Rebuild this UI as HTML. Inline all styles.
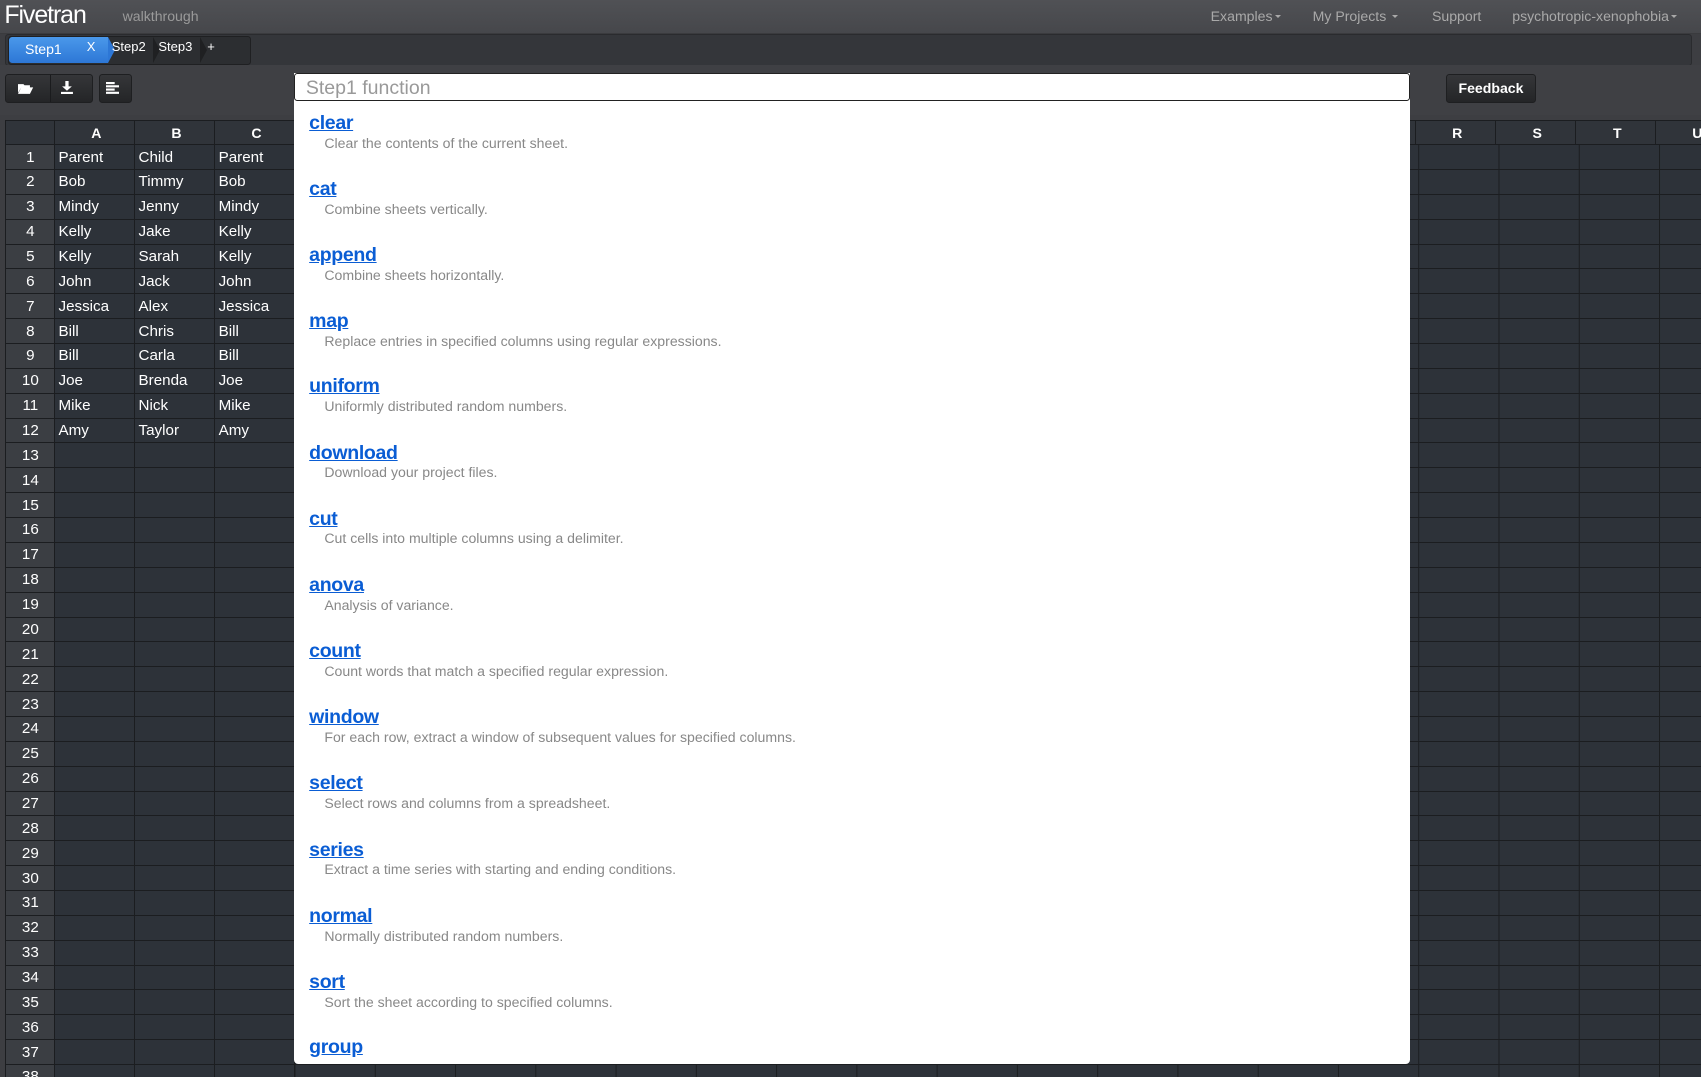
<!DOCTYPE html>
<html><head><meta charset="utf-8"><style>
html,body{margin:0;padding:0;background:#2c3036;overflow:hidden;width:1701px;height:1077px}
#w{zoom:1.08482;width:1568px;height:993px;position:relative;font-family:"Liberation Sans",Arial,sans-serif;overflow:hidden;background:#3d3e42}
.nav{position:absolute;left:0;top:0;width:1568px;height:30px;background:linear-gradient(#505155,#46474b);border-bottom:1px solid #3a3b3e}
.logo{position:absolute;left:4px;top:1px;color:#fff;font-size:23px;letter-spacing:-1px}
.sub{position:absolute;left:113px;top:7px;color:#9a9a9a;font-size:13px}
.menu{position:absolute;top:7px;color:#a9a9a9;font-size:13px}
.car{display:inline-block;border-left:3px solid transparent;border-right:3px solid transparent;border-top:3px solid #a9a9a9;vertical-align:middle;margin-left:2px}
.tabbar{position:absolute;left:5px;top:31px;width:1553px;height:28px;background:#34363a;border:1px solid #2a2b2e;border-radius:3px}
.tabs{position:absolute;left:7px;top:33px;height:25px;width:223px;background:#2c2e31;border:1px solid #1f2022;border-radius:3px}
.t1{position:absolute;left:8px;top:34px;width:92px;height:24px;background:linear-gradient(#4a98ea,#2d77d6);border-radius:3px 0 0 3px;color:#fff;font-size:13px}
.tb{position:absolute;top:36px;color:#fff;font-size:12px}
.toolbar{position:absolute;left:0;top:60px;width:1568px;height:46px;background:#3f4044}
.btn{position:absolute;top:68px;height:25px;background:linear-gradient(#353639,#242527);border:1px solid #1e1f21;border-radius:3px}
.grid{position:absolute;left:5px;top:111px;border-collapse:collapse;table-layout:fixed;width:1594px}
.grid td{border:1px solid #1b1d20;height:22px;padding:0 0 0 3px;color:#fff;font-size:14px;background:#2d3239;white-space:nowrap;overflow:hidden}
.grid tr:first-child td{background:#30343a;text-align:center;font-weight:bold;font-size:13px;height:21px}
.grid td.n{background:#3b3e43;text-align:center;padding:0}
.grid td.r{padding:0;background:#2d3239 linear-gradient(to right,transparent 73px,#1b1d20 73px) 0 0/74px 100% repeat-x}
.dd{position:absolute;left:271px;top:67px;width:1029px;height:914px;background:#fff;border-radius:0 0 4px 4px}
.inp{position:absolute;left:271px;top:67px;width:1017px;height:24px;border:1px solid #222;border-radius:3px;background:#fff;font-size:18px;color:#999;padding-left:10px;line-height:27px}
.it{position:absolute;left:285px}
.it a{color:#0a5dd4;font-size:18px;font-weight:bold;text-decoration:underline;display:block;line-height:20px;letter-spacing:-0.3px}
.it span{display:block;color:#888;font-size:13px;margin-left:14px;line-height:16px}
.ch{position:absolute;top:34px;width:0;height:0;border-top:12px solid transparent;border-bottom:12px solid transparent;border-left:7px solid #1f2022}
</style></head><body><div id="w">
<div class="nav"><div class="logo">Fivetran</div><div class="sub">walkthrough</div>
<div class="menu" style="left:1116px">Examples<span class="car"></span></div>
<div class="menu" style="left:1210px">My Projects <span class="car"></span></div>
<div class="menu" style="left:1320px">Support</div>
<div class="menu" style="left:1394px">psychotropic-xenophobia<span class="car"></span></div></div>
<div class="tabbar"></div><div class="tabs"></div>
<div class="t1"><span style="position:absolute;left:15px;top:4px">Step1</span><span style="position:absolute;left:72px;top:2px;font-size:12px">X</span></div>
<div class="ch" style="left:100px;border-left-color:#2d77d6"></div>
<div class="ch" style="left:141px"></div><div class="ch" style="left:184px"></div>
<div class="tb" style="left:103px">Step2</div><div class="tb" style="left:146px">Step3</div><div class="tb" style="left:191px">+</div>
<div class="toolbar"></div>
<div class="btn" style="left:5px;width:79px"><div style="position:absolute;left:40px;top:0;height:25px;border-left:1px solid #1a1b1d"></div>
<svg style="position:absolute;left:11px;top:7px" width="14" height="11"><path d="M0 2h5l1 1h5v2H3L0 10z M3 5h11l-3 6H0z" fill="#fff"/></svg>
<svg style="position:absolute;left:50px;top:6px" width="11" height="12"><path d="M4 0h3v5h3l-4.5 4L1 5h3z M0 10h11v2H0z" fill="#fff"/></svg></div>
<div class="btn" style="left:91px;width:29px"><svg style="position:absolute;left:6px;top:7px" width="12" height="11"><path d="M0 0h8v2H0zM0 3h12v2H0zM0 6h8v2H0zM0 9h12v2H0z" fill="#fff"/></svg></div>
<div class="btn" style="left:1333px;width:81px;color:#fff;font-size:13px;font-weight:bold;text-align:center;line-height:25px">Feedback</div>
<table class="grid"><colgroup><col style="width:45px"><col span="21" style="width:73.8px"></colgroup>
<tr><td class="n"></td><td>A</td><td>B</td><td>C</td><td>D</td><td>E</td><td>F</td><td>G</td><td>H</td><td>I</td><td>J</td><td>K</td><td>L</td><td>M</td><td>N</td><td>O</td><td>P</td><td>Q</td><td>R</td><td>S</td><td>T</td><td>U</td><td>V</td></tr>
<tr><td class="n">1</td><td>Parent</td><td>Child</td><td>Parent</td><td class="r" colspan="18"></td></tr>
<tr><td class="n">2</td><td>Bob</td><td>Timmy</td><td>Bob</td><td class="r" colspan="18"></td></tr>
<tr><td class="n">3</td><td>Mindy</td><td>Jenny</td><td>Mindy</td><td class="r" colspan="18"></td></tr>
<tr><td class="n">4</td><td>Kelly</td><td>Jake</td><td>Kelly</td><td class="r" colspan="18"></td></tr>
<tr><td class="n">5</td><td>Kelly</td><td>Sarah</td><td>Kelly</td><td class="r" colspan="18"></td></tr>
<tr><td class="n">6</td><td>John</td><td>Jack</td><td>John</td><td class="r" colspan="18"></td></tr>
<tr><td class="n">7</td><td>Jessica</td><td>Alex</td><td>Jessica</td><td class="r" colspan="18"></td></tr>
<tr><td class="n">8</td><td>Bill</td><td>Chris</td><td>Bill</td><td class="r" colspan="18"></td></tr>
<tr><td class="n">9</td><td>Bill</td><td>Carla</td><td>Bill</td><td class="r" colspan="18"></td></tr>
<tr><td class="n">10</td><td>Joe</td><td>Brenda</td><td>Joe</td><td class="r" colspan="18"></td></tr>
<tr><td class="n">11</td><td>Mike</td><td>Nick</td><td>Mike</td><td class="r" colspan="18"></td></tr>
<tr><td class="n">12</td><td>Amy</td><td>Taylor</td><td>Amy</td><td class="r" colspan="18"></td></tr>
<tr><td class="n">13</td><td></td><td></td><td></td><td class="r" colspan="18"></td></tr>
<tr><td class="n">14</td><td></td><td></td><td></td><td class="r" colspan="18"></td></tr>
<tr><td class="n">15</td><td></td><td></td><td></td><td class="r" colspan="18"></td></tr>
<tr><td class="n">16</td><td></td><td></td><td></td><td class="r" colspan="18"></td></tr>
<tr><td class="n">17</td><td></td><td></td><td></td><td class="r" colspan="18"></td></tr>
<tr><td class="n">18</td><td></td><td></td><td></td><td class="r" colspan="18"></td></tr>
<tr><td class="n">19</td><td></td><td></td><td></td><td class="r" colspan="18"></td></tr>
<tr><td class="n">20</td><td></td><td></td><td></td><td class="r" colspan="18"></td></tr>
<tr><td class="n">21</td><td></td><td></td><td></td><td class="r" colspan="18"></td></tr>
<tr><td class="n">22</td><td></td><td></td><td></td><td class="r" colspan="18"></td></tr>
<tr><td class="n">23</td><td></td><td></td><td></td><td class="r" colspan="18"></td></tr>
<tr><td class="n">24</td><td></td><td></td><td></td><td class="r" colspan="18"></td></tr>
<tr><td class="n">25</td><td></td><td></td><td></td><td class="r" colspan="18"></td></tr>
<tr><td class="n">26</td><td></td><td></td><td></td><td class="r" colspan="18"></td></tr>
<tr><td class="n">27</td><td></td><td></td><td></td><td class="r" colspan="18"></td></tr>
<tr><td class="n">28</td><td></td><td></td><td></td><td class="r" colspan="18"></td></tr>
<tr><td class="n">29</td><td></td><td></td><td></td><td class="r" colspan="18"></td></tr>
<tr><td class="n">30</td><td></td><td></td><td></td><td class="r" colspan="18"></td></tr>
<tr><td class="n">31</td><td></td><td></td><td></td><td class="r" colspan="18"></td></tr>
<tr><td class="n">32</td><td></td><td></td><td></td><td class="r" colspan="18"></td></tr>
<tr><td class="n">33</td><td></td><td></td><td></td><td class="r" colspan="18"></td></tr>
<tr><td class="n">34</td><td></td><td></td><td></td><td class="r" colspan="18"></td></tr>
<tr><td class="n">35</td><td></td><td></td><td></td><td class="r" colspan="18"></td></tr>
<tr><td class="n">36</td><td></td><td></td><td></td><td class="r" colspan="18"></td></tr>
<tr><td class="n">37</td><td></td><td></td><td></td><td class="r" colspan="18"></td></tr>
<tr><td class="n">38</td><td></td><td></td><td></td><td class="r" colspan="18"></td></tr>
</table>
<div class="dd"></div>
<div class="inp">Step1 function</div>
<div class="it" style="top:104px"><a>clear</a><span>Clear the contents of the current sheet.</span></div>
<div class="it" style="top:165px"><a>cat</a><span>Combine sheets vertically.</span></div>
<div class="it" style="top:226px"><a>append</a><span>Combine sheets horizontally.</span></div>
<div class="it" style="top:287px"><a>map</a><span>Replace entries in specified columns using regular expressions.</span></div>
<div class="it" style="top:347px"><a>uniform</a><span>Uniformly distributed random numbers.</span></div>
<div class="it" style="top:408px"><a>download</a><span>Download your project files.</span></div>
<div class="it" style="top:469px"><a>cut</a><span>Cut cells into multiple columns using a delimiter.</span></div>
<div class="it" style="top:530px"><a>anova</a><span>Analysis of variance.</span></div>
<div class="it" style="top:591px"><a>count</a><span>Count words that match a specified regular expression.</span></div>
<div class="it" style="top:652px"><a>window</a><span>For each row, extract a window of subsequent values for specified columns.</span></div>
<div class="it" style="top:713px"><a>select</a><span>Select rows and columns from a spreadsheet.</span></div>
<div class="it" style="top:774px"><a>series</a><span>Extract a time series with starting and ending conditions.</span></div>
<div class="it" style="top:835px"><a>normal</a><span>Normally distributed random numbers.</span></div>
<div class="it" style="top:896px"><a>sort</a><span>Sort the sheet according to specified columns.</span></div>
<div class="it" style="top:956px;height:25px;overflow:hidden"><a>group</a></div>
</div></body></html>
